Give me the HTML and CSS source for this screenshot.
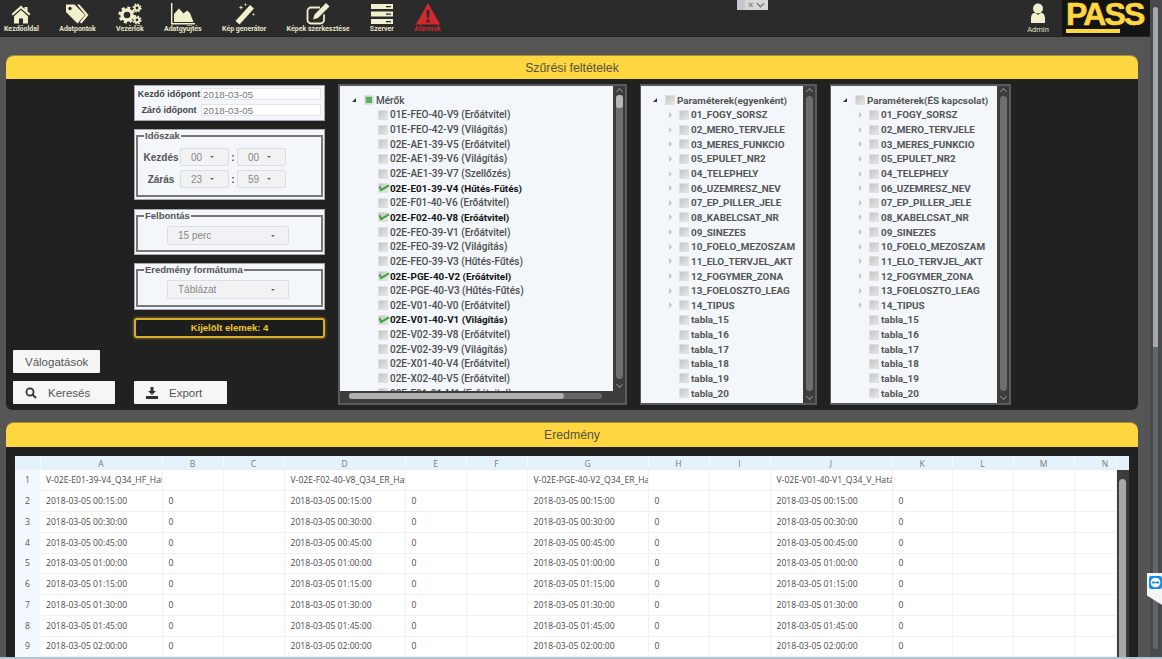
FILE: index.html
```html
<!DOCTYPE html>
<html lang="hu">
<head>
    <meta charset="UTF-8">
    <title>PASS</title>
    <link rel="stylesheet" href="styles.css">
</head>
<body>
<div class="page">
    <header class="topbar">
        <nav class="menu">
            <a class="menu-item">
                <svg viewBox="0 0 24 22"><path d="M12 2.500 2.500 11l1.400 1.600L12 5.400l8.100 7.200 1.400-1.600-3-2.700V4h-3v2z"/><path d="M12 7 5 13.200V20.500h5v-5h4v5h5v-7.300z"/></svg>
                <span>Kezdőoldal</span>
            </a>
            <a class="menu-item">
                <svg viewBox="0 0 24 22"><path d="M1 1.500h8.500L20 12l-7.500 8.500L1 9z"/><path d="M12 1.500h2.500L23.500 12l-7 8.500-1.800-1.200 5.800-7.300z"/><circle cx="5" cy="5.500" r="1.700" fill="#2b2b2b"/></svg>
                <span>Adatpontok</span>
            </a>
            <a class="menu-item">
                <svg viewBox="0 0 24 22">
                    <circle cx="9" cy="12" r="5" fill="none" stroke-width="3.400"/>
                    <circle cx="9" cy="12" r="7.300" fill="none" stroke-width="2.600" stroke-dasharray="3 2.740"/>
                    <circle cx="19" cy="5" r="2.300" fill="none" stroke-width="1.800"/>
                    <circle cx="19" cy="5" r="3.800" fill="none" stroke-width="1.500" stroke-dasharray="1.700 1.280"/>
                    <circle cx="19" cy="17" r="2.300" fill="none" stroke-width="1.800"/>
                    <circle cx="19" cy="17" r="3.800" fill="none" stroke-width="1.500" stroke-dasharray="1.700 1.280"/>
                </svg>
                <span>Vezérlők</span>
            </a>
            <a class="menu-item">
                <svg viewBox="0 0 24 22"><path d="M0 0h1.400v20H24v1.500H0z"/><path d="M3 19V11l5-5.500 4.500 5 3.500-3 3 2.500 3.500 9z"/></svg>
                <span>Adatgyűjtés</span>
            </a>
            <a class="menu-item">
                <svg viewBox="0 0 24 22"><path d="M18 2l4 3.500L7.500 21.500 3.500 18z"/><path d="M9 2l.6 1.900 1.900.6-1.900.6L9 7l-.6-1.900-1.900-.6 1.900-.6zM13.500 0l.4 1.100 1.100.4-1.100.4-.4 1.100-.4-1.100-1.100-.4 1.100-.4zM21.500 10l.4 1.100 1.100.4-1.100.4-.4 1.100-.4-1.100-1.100-.4 1.100-.4z"/></svg>
                <span>Kép generátor</span>
            </a>
            <a class="menu-item">
                <svg viewBox="0 0 24 22"><path fill="none" stroke-width="1.800" d="M18 11.500V17a3.500 3.500 0 0 1-3.500 3.500H5A3.500 3.500 0 0 1 1.500 17V8A3.500 3.500 0 0 1 5 4.500h9"/><path d="M20 0l3.500 3.500-11.500 11.500-5 1.500 1.500-5z"/></svg>
                <span>Képek szerkesztése</span>
            </a>
            <a class="menu-item">
                <svg viewBox="0 0 24 22"><path d="M1 1h22v5H1zM1 8.500h22v5H1zM1 16h22v5H1z"/><path fill="#2b2b2b" d="M16 3h5v1.300h-5zM16 10.500h5v1.300h-5zM16 18h5v1.300h-5z"/></svg>
                <span>Szerver</span>
            </a>
            <a class="menu-item alarm">
                <svg viewBox="0 0 24 22"><path d="M12 0 24 21.500H0z"/><path fill="#2b2b2b" d="M10.500 7h3l-.5 8h-2zM10.500 16.500h3v3h-3z"/></svg>
                <span>Alarmok</span>
            </a>
        </nav>
        <div class="mini-ctrl"><i></i><b>×</b><svg viewBox="0 0 10 6"><path d="M1 1l4 4 4-4" fill="none" stroke="#777" stroke-width="1.500"/></svg></div>
        <a class="menu-item admin">
            <svg viewBox="0 0 24 22"><circle cx="12" cy="5.500" r="5"/><path d="M5 20v-5c0-3 1.500-5 4-5.500L12 12l3-2.500c2.500.5 4 2.500 4 5.500v5z"/></svg>
            <span>Admin</span>
        </a>
        <div class="logo"><span>PASS</span></div>
    </header>

    <div class="main">
        <div class="content">
            <section class="panel filter-panel">
                <h2 class="panel-head">Szűrési feltételek</h2>
                <div class="panel-body filter-body">
                    <div class="col-left">
                        <button class="btn btn-val">Válogatások</button>
                        <button class="btn btn-search">
                            <svg viewBox="0 0 12 12"><circle cx="5" cy="5" r="3.600" fill="none" stroke="#333" stroke-width="1.700"/><path d="M7.600 7.600 11 11" stroke="#333" stroke-width="2"/></svg>
                            Keresés
                        </button>
                    </div>

                    <div class="col-form">
                        <div class="box date-box">
                            <div class="date-row"><label>Kezdő időpont</label><input type="text" value="2018-03-05"></div>
                            <div class="date-row"><label>Záró időpont</label><input type="text" value="2018-03-05"></div>
                        </div>
                        <div class="box box-time">
                            <fieldset class="time-set">
                                <legend>Időszak</legend>
                                <div class="time-row">
                                    <label>Kezdés</label>
                                    <div class="ddl ddl-small"><span>00</span><i></i></div>
                                    <em>:</em>
                                    <div class="ddl ddl-small"><span>00</span><i></i></div>
                                </div>
                                <div class="time-row">
                                    <label>Zárás</label>
                                    <div class="ddl ddl-small"><span>23</span><i></i></div>
                                    <em>:</em>
                                    <div class="ddl ddl-small"><span>59</span><i></i></div>
                                </div>
                            </fieldset>
                        </div>
                        <div class="box box-res">
                            <fieldset class="pick-set">
                                <legend>Felbontás</legend>
                                <div class="ddl ddl-wide"><span>15 perc</span><i></i></div>
                            </fieldset>
                        </div>
                        <div class="box box-fmt">
                            <fieldset class="pick-set">
                                <legend>Eredmény formátuma</legend>
                                <div class="ddl ddl-wide"><span>Táblázat</span><i></i></div>
                            </fieldset>
                        </div>
                        <div class="selected-count">Kijelölt elemek: 4</div>
                        <button class="btn btn-export">
                            <svg viewBox="0 0 12 12"><path d="M4.500 0h3v4H10L6 8 2 4h2.500zM0 9h12v3H0z" fill="#333"/></svg>
                            Export
                        </button>
                    </div>

                    <div class="tree tree-meters">
                        <div class="tree-main">
                            <ul class="tree-list">
                                <li class="root"><i class="exp open"></i><i class="cb part"></i>Mérők</li>
                                <li class="leaf"><i class="exp"></i><i class="cb"></i>01E-FEO-40-V9 (Erőátvitel)</li>
                                <li class="leaf"><i class="exp"></i><i class="cb"></i>01E-FEO-42-V9 (Világítás)</li>
                                <li class="leaf"><i class="exp"></i><i class="cb"></i>02E-AE1-39-V5 (Erőátvitel)</li>
                                <li class="leaf"><i class="exp"></i><i class="cb"></i>02E-AE1-39-V6 (Világítás)</li>
                                <li class="leaf"><i class="exp"></i><i class="cb"></i>02E-AE1-39-V7 (Szellőzés)</li>
                                <li class="leaf on"><i class="exp"></i><i class="cb check"></i>02E-E01-39-V4 (Hűtés-Fűtés)</li>
                                <li class="leaf"><i class="exp"></i><i class="cb"></i>02E-F01-40-V6 (Erőátvitel)</li>
                                <li class="leaf on"><i class="exp"></i><i class="cb check"></i>02E-F02-40-V8 (Erőátvitel)</li>
                                <li class="leaf"><i class="exp"></i><i class="cb"></i>02E-FEO-39-V1 (Erőátvitel)</li>
                                <li class="leaf"><i class="exp"></i><i class="cb"></i>02E-FEO-39-V2 (Világítás)</li>
                                <li class="leaf"><i class="exp"></i><i class="cb"></i>02E-FEO-39-V3 (Hűtés-Fűtés)</li>
                                <li class="leaf on"><i class="exp"></i><i class="cb check"></i>02E-PGE-40-V2 (Erőátvitel)</li>
                                <li class="leaf"><i class="exp"></i><i class="cb"></i>02E-PGE-40-V3 (Hűtés-Fűtés)</li>
                                <li class="leaf"><i class="exp"></i><i class="cb"></i>02E-V01-40-V0 (Erőátvitel)</li>
                                <li class="leaf on"><i class="exp"></i><i class="cb check"></i>02E-V01-40-V1 (Világítás)</li>
                                <li class="leaf"><i class="exp"></i><i class="cb"></i>02E-V02-39-V8 (Erőátvitel)</li>
                                <li class="leaf"><i class="exp"></i><i class="cb"></i>02E-V02-39-V9 (Világítás)</li>
                                <li class="leaf"><i class="exp"></i><i class="cb"></i>02E-X01-40-V4 (Erőátvitel)</li>
                                <li class="leaf"><i class="exp"></i><i class="cb"></i>02E-X02-40-V5 (Erőátvitel)</li>
                                <li class="leaf"><i class="exp"></i><i class="cb"></i>02E-E01-01-M1 (Erőátvitel)</li>
                            </ul>
                            <div class="vscroll has-thumb"><i></i><b class="chev-up"></b><b class="chev-down"></b></div>
                        </div>
                        <div class="hscroll"><i></i></div>
                    </div>

                    <div class="tree tree-params">
                        <div class="tree-main">
                            <ul class="tree-list">
                                <li class="root"><i class="exp open"></i><i class="cb"></i>Paraméterek(egyenként)</li>
                                <li class="leaf"><i class="exp more"></i><i class="cb"></i>01_FOGY_SORSZ</li>
                                <li class="leaf"><i class="exp more"></i><i class="cb"></i>02_MERO_TERVJELE</li>
                                <li class="leaf"><i class="exp more"></i><i class="cb"></i>03_MERES_FUNKCIO</li>
                                <li class="leaf"><i class="exp more"></i><i class="cb"></i>05_EPULET_NR2</li>
                                <li class="leaf"><i class="exp more"></i><i class="cb"></i>04_TELEPHELY</li>
                                <li class="leaf"><i class="exp more"></i><i class="cb"></i>06_UZEMRESZ_NEV</li>
                                <li class="leaf"><i class="exp more"></i><i class="cb"></i>07_EP_PILLER_JELE</li>
                                <li class="leaf"><i class="exp more"></i><i class="cb"></i>08_KABELCSAT_NR</li>
                                <li class="leaf"><i class="exp more"></i><i class="cb"></i>09_SINEZES</li>
                                <li class="leaf"><i class="exp more"></i><i class="cb"></i>10_FOELO_MEZOSZAM</li>
                                <li class="leaf"><i class="exp more"></i><i class="cb"></i>11_ELO_TERVJEL_AKT</li>
                                <li class="leaf"><i class="exp more"></i><i class="cb"></i>12_FOGYMER_ZONA</li>
                                <li class="leaf"><i class="exp more"></i><i class="cb"></i>13_FOELOSZTO_LEAG</li>
                                <li class="leaf"><i class="exp more"></i><i class="cb"></i>14_TIPUS</li>
                                <li class="leaf"><i class="exp"></i><i class="cb"></i>tabla_15</li>
                                <li class="leaf"><i class="exp"></i><i class="cb"></i>tabla_16</li>
                                <li class="leaf"><i class="exp"></i><i class="cb"></i>tabla_17</li>
                                <li class="leaf"><i class="exp"></i><i class="cb"></i>tabla_18</li>
                                <li class="leaf"><i class="exp"></i><i class="cb"></i>tabla_19</li>
                                <li class="leaf"><i class="exp"></i><i class="cb"></i>tabla_20</li>
                            </ul>
                            <div class="vscroll"><b class="chev-up"></b><b class="chev-down"></b></div>
                        </div>
                    </div>

                    <div class="tree tree-and">
                        <div class="tree-main">
                            <ul class="tree-list">
                                <li class="root"><i class="exp open"></i><i class="cb"></i>Paraméterek(ÉS kapcsolat)</li>
                                <li class="leaf"><i class="exp more"></i><i class="cb"></i>01_FOGY_SORSZ</li>
                                <li class="leaf"><i class="exp more"></i><i class="cb"></i>02_MERO_TERVJELE</li>
                                <li class="leaf"><i class="exp more"></i><i class="cb"></i>03_MERES_FUNKCIO</li>
                                <li class="leaf"><i class="exp more"></i><i class="cb"></i>05_EPULET_NR2</li>
                                <li class="leaf"><i class="exp more"></i><i class="cb"></i>04_TELEPHELY</li>
                                <li class="leaf"><i class="exp more"></i><i class="cb"></i>06_UZEMRESZ_NEV</li>
                                <li class="leaf"><i class="exp more"></i><i class="cb"></i>07_EP_PILLER_JELE</li>
                                <li class="leaf"><i class="exp more"></i><i class="cb"></i>08_KABELCSAT_NR</li>
                                <li class="leaf"><i class="exp more"></i><i class="cb"></i>09_SINEZES</li>
                                <li class="leaf"><i class="exp more"></i><i class="cb"></i>10_FOELO_MEZOSZAM</li>
                                <li class="leaf"><i class="exp more"></i><i class="cb"></i>11_ELO_TERVJEL_AKT</li>
                                <li class="leaf"><i class="exp more"></i><i class="cb"></i>12_FOGYMER_ZONA</li>
                                <li class="leaf"><i class="exp more"></i><i class="cb"></i>13_FOELOSZTO_LEAG</li>
                                <li class="leaf"><i class="exp more"></i><i class="cb"></i>14_TIPUS</li>
                                <li class="leaf"><i class="exp"></i><i class="cb"></i>tabla_15</li>
                                <li class="leaf"><i class="exp"></i><i class="cb"></i>tabla_16</li>
                                <li class="leaf"><i class="exp"></i><i class="cb"></i>tabla_17</li>
                                <li class="leaf"><i class="exp"></i><i class="cb"></i>tabla_18</li>
                                <li class="leaf"><i class="exp"></i><i class="cb"></i>tabla_19</li>
                                <li class="leaf"><i class="exp"></i><i class="cb"></i>tabla_20</li>
                            </ul>
                            <div class="vscroll"><b class="chev-up"></b><b class="chev-down"></b></div>
                        </div>
                    </div>
                </div>
            </section>

            <section class="panel result-panel">
                <h2 class="panel-head">Eredmény</h2>
                <div class="panel-body result-body">
                    <div class="sheet">
                        <table class="grid">
                            <colgroup>
                                <col class="c-num"><col class="c-date"><col class="c-val"><col class="c-val">
                                <col class="c-date2"><col class="c-val"><col class="c-val">
                                <col class="c-date2"><col class="c-val"><col class="c-val">
                                <col class="c-date"><col class="c-val2"><col class="c-val"><col class="c-val"><col class="c-last">
                            </colgroup>
                            <thead>
                                <tr><th></th><th>A</th><th>B</th><th>C</th><th>D</th><th>E</th><th>F</th><th>G</th><th>H</th><th>I</th><th>J</th><th>K</th><th>L</th><th>M</th><th class="th-n">N</th></tr>
                            </thead>
                            <tbody>
                                <tr><th>1</th><td>V-02E-E01-39-V4_Q34_HF_Hatás</td><td></td><td></td><td>V-02E-F02-40-V8_Q34_ER_Hatás</td><td></td><td></td><td>V-02E-PGE-40-V2_Q34_ER_Hatás</td><td></td><td></td><td>V-02E-V01-40-V1_Q34_V_Hatás</td><td></td><td></td><td></td><td></td></tr>
                                <tr><th>2</th><td>2018-03-05 00:15:00</td><td>0</td><td></td><td>2018-03-05 00:15:00</td><td>0</td><td></td><td>2018-03-05 00:15:00</td><td>0</td><td></td><td>2018-03-05 00:15:00</td><td>0</td><td></td><td></td><td></td></tr>
                                <tr><th>3</th><td>2018-03-05 00:30:00</td><td>0</td><td></td><td>2018-03-05 00:30:00</td><td>0</td><td></td><td>2018-03-05 00:30:00</td><td>0</td><td></td><td>2018-03-05 00:30:00</td><td>0</td><td></td><td></td><td></td></tr>
                                <tr><th>4</th><td>2018-03-05 00:45:00</td><td>0</td><td></td><td>2018-03-05 00:45:00</td><td>0</td><td></td><td>2018-03-05 00:45:00</td><td>0</td><td></td><td>2018-03-05 00:45:00</td><td>0</td><td></td><td></td><td></td></tr>
                                <tr><th>5</th><td>2018-03-05 01:00:00</td><td>0</td><td></td><td>2018-03-05 01:00:00</td><td>0</td><td></td><td>2018-03-05 01:00:00</td><td>0</td><td></td><td>2018-03-05 01:00:00</td><td>0</td><td></td><td></td><td></td></tr>
                                <tr><th>6</th><td>2018-03-05 01:15:00</td><td>0</td><td></td><td>2018-03-05 01:15:00</td><td>0</td><td></td><td>2018-03-05 01:15:00</td><td>0</td><td></td><td>2018-03-05 01:15:00</td><td>0</td><td></td><td></td><td></td></tr>
                                <tr><th>7</th><td>2018-03-05 01:30:00</td><td>0</td><td></td><td>2018-03-05 01:30:00</td><td>0</td><td></td><td>2018-03-05 01:30:00</td><td>0</td><td></td><td>2018-03-05 01:30:00</td><td>0</td><td></td><td></td><td></td></tr>
                                <tr><th>8</th><td>2018-03-05 01:45:00</td><td>0</td><td></td><td>2018-03-05 01:45:00</td><td>0</td><td></td><td>2018-03-05 01:45:00</td><td>0</td><td></td><td>2018-03-05 01:45:00</td><td>0</td><td></td><td></td><td></td></tr>
                                <tr><th>9</th><td>2018-03-05 02:00:00</td><td>0</td><td></td><td>2018-03-05 02:00:00</td><td>0</td><td></td><td>2018-03-05 02:00:00</td><td>0</td><td></td><td>2018-03-05 02:00:00</td><td>0</td><td></td><td></td><td></td></tr>
                            </tbody>
                        </table>
                        <div class="sheet-side">
                            <div class="sheet-corner"></div>
                            <div class="sheet-scroll"><i></i></div>
                        </div>
                    </div>
                </div>
            </section>
        </div>
        <div class="page-scroll"><i></i></div>
    </div>
    <div class="tv-tab"><svg viewBox="0 0 14 14"><rect width="14" height="14" rx="2.500" fill="#0e8ee9"/><circle cx="7" cy="7" r="5.200" fill="#fff"/><path d="M2.800 7l2.200-2v1.200h4V5l2.200 2L9 9V7.800H5V9z" fill="#0e8ee9"/></svg></div>
</div>
</body>
</html>
```

FILE: styles.css
```css
* { box-sizing: border-box; }

html, body {
    margin: 0;
    height: 100%;
    overflow: hidden;
}

body {
    font-family: "Liberation Sans", Arial, sans-serif;
    background-color: #555;
    color: #444;
}

.page {
    position: relative;
    display: flex;
    flex-direction: column;
    height: 659px;
    border-bottom: 2px solid #b4c4cc;
}

/* top menu */
.topbar {
    display: flex;
    align-items: flex-start;
    height: 37px;
    width: 1150px;
    background-color: #2b2b2b;
    border-bottom: 1px solid #222;
    flex-shrink: 0;
}

.menu {
    display: flex;
    gap: 20.300px;
    padding-left: 4px;
    flex: 1;
}

.menu-item {
    display: flex;
    flex-direction: column;
    align-items: center;
    padding-top: 3px;
    color: #e6e5c4;
    font-family: Roboto, sans-serif;
    font-size: 7px;
    font-weight: 700;
    line-height: 9px;
    white-space: nowrap;
}

.menu-item svg {
    width: 24px;
    height: 22px;
    fill: #f2efcc;
    stroke: #f2efcc;
    stroke-width: 0;
}

.menu-item.alarm { color: #c9262b; }
.menu-item.alarm svg { fill: #d3272c; stroke: none; }
.menu-item.admin {
    width: 24px;
    margin-right: 12px;
    font-weight: 400;
    font-size: 7.500px;
}

.mini-ctrl {
    position: absolute;
    left: 737px;
    top: 0;
    width: 31px;
    height: 10px;
    display: flex;
    align-items: center;
    gap: 3px;
    background-color: #d8d8d8;
    color: #888;
    font-size: 9px;
    line-height: 10px;
}

.mini-ctrl i {
    width: 8px;
    height: 10px;
    background-color: #c4c8cc;
}

.mini-ctrl svg {
    width: 9px;
    height: 6px;
}

.logo {
    width: 88px;
    height: 36px;
    background-color: #141414;
    padding: 0 0 0 4px;
    color: #fdd640;
    font-size: 32px;
    font-weight: 700;
    letter-spacing: -1.800px;
    line-height: 29px;
    -webkit-text-stroke: 0.600px #fdd640;
}

.logo span {
    display: inline-block;
    height: 33px;
    width: 82px;
    border-bottom: 4px solid transparent;
    border-image: linear-gradient(to right, #fdd640 66%, transparent 66%) 1;
}

/* page */
.main {
    display: flex;
    flex: 1;
    min-height: 0;
}

.content {
    width: 1150px;
    padding: 18px 12px 0 6px;
    flex-shrink: 0;
}

.page-scroll {
    position: absolute;
    right: 0;
    top: 0;
    bottom: 0;
    width: 12px;
    background-color: #484b4d;
    padding: 7px 4px 8px 3px;
}

.page-scroll i {
    display: block;
    height: 100%;
    background: linear-gradient(to bottom, #a8a8a8 0, #a8a8a8 53%, #60676b 53%);
    border-radius: 4px;
}

.panel-head {
    margin: 0;
    height: 24px;
    background-color: #fdd640;
    border-radius: 8px 8px 0 0;
    border-top: 1px solid #a8902e;
    font-size: 12.300px;
    font-weight: 400;
    line-height: 25px;
    text-align: center;
    color: #55523e;
}

.panel-body {
    background-color: #212121;
}

.filter-body {
    display: flex;
    height: 331px;
    padding: 5px 0;
    border-radius: 0 0 6px 6px;
}

.result-panel { margin-top: 12px; }
.result-panel .panel-head { height: 25px; }

.result-body {
    height: 210px;
    padding: 9px 9px 0;
}

/* left column */
.col-left {
    width: 128px;
    padding: 0 13px 1px 7px;
    display: flex;
    flex-direction: column;
    justify-content: flex-end;
    align-items: flex-start;
    gap: 8px;
}

.btn {
    display: flex;
    align-items: center;
    height: 23px;
    border: 0;
    border-radius: 1px;
    background-color: #f6f6f6;
    color: #555;
    font-family: "Liberation Sans", Arial, sans-serif;
    font-size: 11.500px;
    padding: 0 0 0 12px;
}

.btn svg {
    width: 12px;
    height: 12px;
    margin-right: 11px;
}

.btn-val { width: 87px; }
.btn-search { width: 102px; }
.btn-export {
    width: 93px;
    margin-top: auto;
    padding-left: 12px;
}

.col-form {
    width: 191px;
    margin-right: 13px;
    padding: 1px 0;
    display: flex;
    flex-direction: column;
    flex-shrink: 0;
}

.box {
    background-color: #f3f6fa;
    border: 1px solid #a8a8a8;
    padding: 0 1px 2px;
    margin-bottom: 8px;
}

.date-box { height: 36px; padding: 0 2px; }
.box-time { height: 71px; margin-bottom: 9px; }
.box-res { height: 46px; }
.box-fmt { height: 47px; }

.date-row {
    display: flex;
    align-items: center;
    height: 16px;
}

.date-row label {
    width: 64px;
    text-align: center;
    font-size: 9px;
    font-weight: 700;
    color: #444;
    white-space: nowrap;
}

.date-row input {
    width: 120px;
    height: 12px;
    margin-left: 0;
    padding: 0 1px;
    border: 1px solid #e3e6ea;
    background-color: #fff;
    font-family: "Liberation Sans", Arial, sans-serif;
    font-size: 9.800px;
    color: #777;
}

fieldset {
    margin: 0;
    padding: 0;
    border: 2px solid #777;
    min-width: 0;
}

legend {
    margin-left: 6px;
    padding: 0 1px;
    font-size: 9.500px;
    font-weight: 700;
    line-height: 12px;
    color: #555;
}

.time-set {
    height: 67px;
    padding-top: 6px;
}

.time-row {
    display: flex;
    align-items: center;
    height: 18px;
    margin-bottom: 4px;
}

.time-row label {
    width: 42px;
    padding-left: 4px;
    text-align: center;
    font-size: 10px;
    font-weight: 700;
    color: #555;
}

.time-row em {
    width: 8px;
    font-style: normal;
    text-align: center;
    font-size: 10px;
    font-weight: 700;
}

.pick-set {
    height: 100%;
    padding-top: 4px;
}

.ddl {
    display: flex;
    align-items: center;
    justify-content: space-between;
    height: 18px;
    background-color: #f1f2f3;
    border: 1px solid #dcdee0;
    border-radius: 2px;
    color: #888;
    font-size: 10px;
}

.ddl i {
    width: 0;
    height: 0;
    border-left: 2px solid transparent;
    border-right: 2px solid transparent;
    border-top: 2.500px solid #666;
}

.ddl-small {
    width: 49px;
    padding: 0 14px 0 10px;
}

.ddl-wide {
    width: 122px;
    height: 19px;
    margin-left: 29px;
    padding: 0 13px 0 10px;
}

.selected-count {
    height: 20px;
    border: 2px solid #d4b02a;
    border-radius: 3px;
    background-color: #1d1d1d;
    box-shadow: 0 0 3px #b3942a;
    color: #f0c92f;
    font-size: 9.500px;
    font-weight: 700;
    line-height: 15px;
    text-align: center;
}

/* trees */
.tree {
    display: flex;
    flex-direction: column;
    margin-right: 13px;
    background-color: #3c3c3c;
    border: 2px solid #5a5a5a;
    border-left-width: 1px;
    flex-shrink: 0;
}

.tree-meters { width: 289px; border-left-width: 2px; }
.tree-params { width: 177px; }
.tree-and { width: 181px; margin-right: 0; }

.tree-main {
    display: flex;
    flex: 1;
    min-height: 0;
}

.tree-list {
    flex: 1;
    margin: 0;
    padding: 7px 0 0;
    list-style: none;
    background-color: #f3f7fb;
    overflow: hidden;
}

.tree-list li {
    display: flex;
    align-items: center;
    height: 14.650px;
    font-family: Roboto, sans-serif;
    font-size: 10px;
    font-weight: 500;
    color: #4c4c4c;
    white-space: nowrap;
}

.tree-params li, .tree-and li { font-weight: 700; color: #555; font-size: 9.900px; }

.tree-list .root { padding-left: 11px; }
.tree-list .leaf { padding-left: 26px; }
.tree-list .on { color: #111; font-weight: 700; font-size: 9.800px; }

.exp {
    position: relative;
    width: 8px;
    margin-right: 5px;
    height: 6px;
}

.leaf .exp { margin-right: 4px; }

.exp.open::before {
    content: "";
    position: absolute;
    left: 1px;
    top: 1px;
    border-left: 4px solid transparent;
    border-bottom: 4px solid #333;
}

.exp.more::before {
    content: "";
    position: absolute;
    left: 2px;
    top: 0;
    border-top: 3px solid transparent;
    border-bottom: 3px solid transparent;
    border-left: 3px solid #c2c6ca;
}

.cb {
    position: relative;
    width: 10px;
    height: 10px;
    margin-right: 2px;
    flex-shrink: 0;
    background: linear-gradient(135deg, #c4c4c4, #e6e6e6);
    border: 1px solid #e0e0e0;
}

.cb.part::after {
    content: "";
    position: absolute;
    left: 1px;
    top: 1px;
    width: 6px;
    height: 6px;
    background-color: #55b455;
}

.cb.check::after {
    content: "";
    position: absolute;
    left: 0;
    top: 0;
    width: 8px;
    height: 3px;
    border-left: 2.500px solid #3aa53a;
    border-bottom: 2.500px solid #3aa53a;
    transform: rotate(-30deg);
}

.vscroll {
    position: relative;
    width: 12px;
    background-color: #3c3c3c;
    flex-shrink: 0;
}

.vscroll::before {
    content: "";
    position: absolute;
    left: 3px;
    top: 10px;
    bottom: 12px;
    width: 7px;
    border-radius: 4px;
    background-color: #6e6e6e;
}

.vscroll i {
    position: absolute;
    left: 3px;
    top: 9px;
    width: 7px;
    height: 13px;
    border-radius: 3px;
    background-color: #b8b8b8;
}

.chev-up, .chev-down {
    position: absolute;
    left: 4px;
    width: 5px;
    height: 5px;
    border-left: 1px solid #888;
    border-top: 1px solid #888;
}

.chev-up { top: 3px; transform: rotate(45deg); }
.chev-down { bottom: 4px; transform: rotate(225deg); }

.hscroll {
    position: relative;
    height: 12px;
    flex-shrink: 0;
    background-color: #3c3c3c;
    margin: 0 3px;
}

.hscroll::before {
    content: "";
    position: absolute;
    left: 6px;
    right: 20px;
    top: 2px;
    height: 6px;
    border-radius: 3px;
    background-color: #666;
}

.hscroll i {
    position: absolute;
    left: 6px;
    top: 2px;
    width: 215px;
    height: 6px;
    border-radius: 3px;
    background-color: #b0b0b0;
}

/* result sheet */
.sheet {
    display: flex;
    width: 1114px;
    overflow: hidden;
}

.grid {
    width: 1101px;
    border-collapse: collapse;
    table-layout: fixed;
    background-color: #fff;
    font-family: "Open Sans", sans-serif;
    font-size: 8.600px;
    color: #4a4a4a;
}

.c-num { width: 25px; }
.c-date { width: 122px; }
.c-date2 { width: 121px; }
.c-val { width: 61px; }
.c-val2 { width: 60px; }
.c-last { width: 42px; }

.grid thead th {
    height: 14px;
    padding: 0;
    background-color: #e6f2fb;
    border-right: 1px solid #f2f8fc;
    font-size: 8.500px;
    font-weight: 400;
    color: #777;
}

.grid .th-n { padding-left: 20px; }

.grid tbody tr { height: 20.750px; }

.grid tbody th {
    padding: 0;
    background-color: #f2f8fd;
    font-weight: 400;
    color: #555;
}

.grid td {
    padding: 0 0 0 6px;
    border-right: 1px solid #f0f2f4;
    border-bottom: 1px solid #f0f2f4;
    white-space: nowrap;
    overflow: hidden;
}

.sheet-side {
    width: 13px;
    flex-shrink: 0;
    display: flex;
    flex-direction: column;
}

.sheet-corner {
    height: 14px;
    background-color: #e6f2fb;
}

.sheet-scroll {
    flex: 1;
    width: 12px;
    padding: 9px 3px 0 2px;
    background-color: #3c3c3c;
}

.sheet-scroll i {
    display: block;
    height: 100%;
    border-radius: 4px 4px 0 0;
    background-color: #a8a8a8;
}

.tv-tab {
    position: absolute;
    left: 1147px;
    top: 573px;
    width: 15px;
    height: 32px;
    padding: 3px 0 0 2px;
    background-color: #f4f4f4;
    clip-path: polygon(0 0, 100% 0, 100% 100%, 0 70%);
}

.tv-tab svg {
    display: block;
    width: 13px;
    height: 13px;
}
```
